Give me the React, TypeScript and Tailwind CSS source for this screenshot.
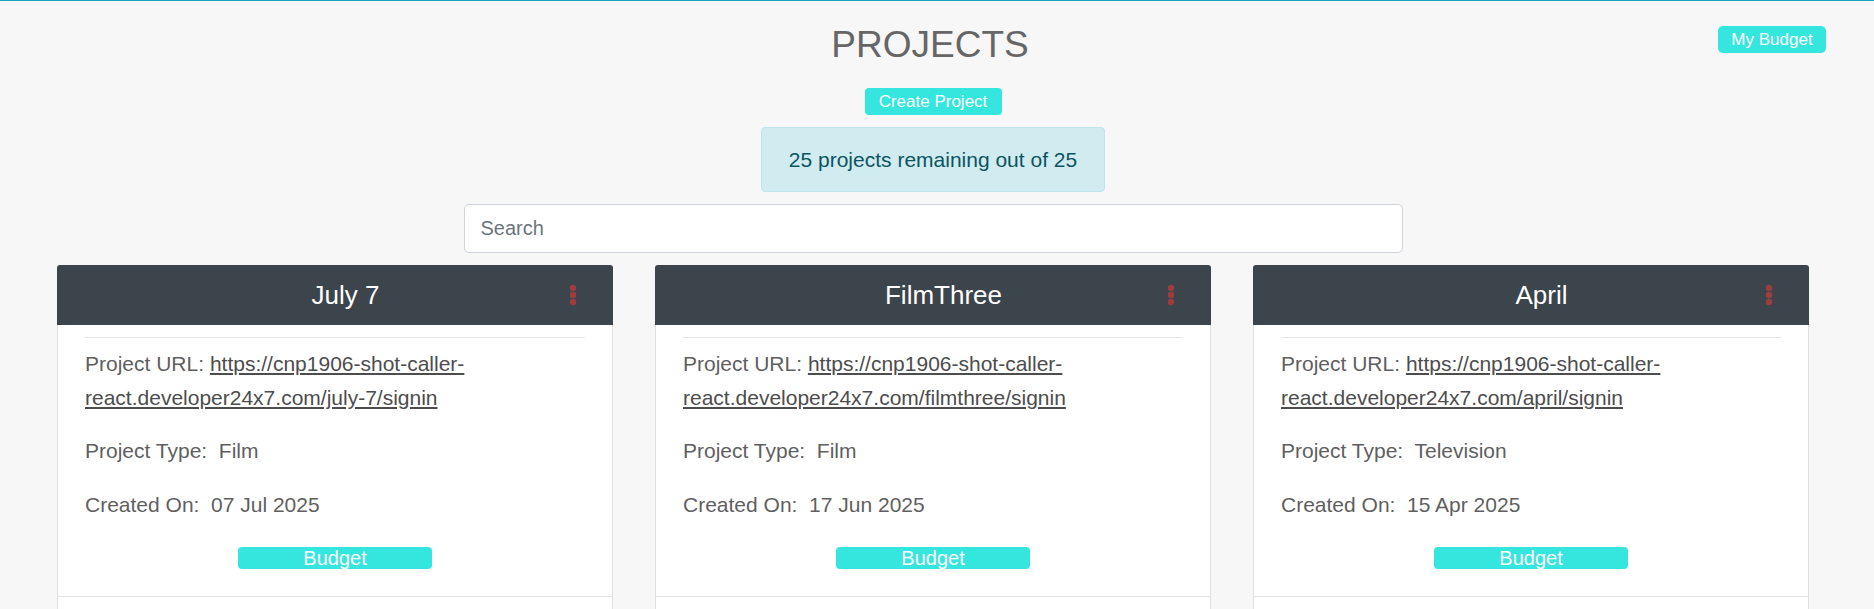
import React from "react";

type Project = {
  name: string;
  slug: string;
  type: string;
  created: string;
};

const projects: Project[] = [
  { name: "July 7", slug: "july-7", type: "Film", created: "07 Jul 2025" },
  { name: "FilmThree", slug: "filmthree", type: "Film", created: "17 Jun 2025" },
  { name: "April", slug: "april", type: "Television", created: "15 Apr 2025" },
];

const KebabIcon = () => (
  <svg width="8" height="22" viewBox="0 0 8 22" fill="#9e3d3d">
    <circle cx="4" cy="4" r="3.2" />
    <circle cx="4" cy="11" r="3.2" />
    <circle cx="4" cy="18" r="3.2" />
  </svg>
);

const ProjectCard: React.FC<{ project: Project }> = ({ project }) => {
  const url = `https://cnp1906-shot-caller-react.developer24x7.com/${project.slug}/signin`;
  return (
    <div className="bg-white border border-[#dfdfdf] rounded-[3px]">
      <div className="flex items-center h-[60px] bg-[#3c444c] pl-[71px] pr-[30px] -mx-px -mt-px rounded-t-[3px]">
        <h3 className="flex-1 text-center text-white text-[26px] leading-[30px]">
          {project.name}
        </h3>
        <button className="w-[20px] flex justify-center">
          <KebabIcon />
        </button>
      </div>

      <div className="px-[27px] pt-[12px] pb-[27px] border-b border-[#e3e3e3] text-[21px] leading-[33.5px] text-[#5f5f5f]">
        <hr className="border-t border-[#e5e5e5] mb-[9px]" />
        <p className="mb-[20px]">
          Project URL:{" "}
          <a href="#" className="underline text-[#4d4d4d]">
            {url}
          </a>
        </p>
        <p className="mb-[20px] whitespace-pre">Project Type:  {project.type}</p>
        <p className="mb-[26px] whitespace-pre">Created On:  {project.created}</p>
        <div className="flex justify-center">
          <button className="w-[194px] h-[22px] bg-[#35e6df] text-white text-[20px] leading-[22px] rounded-[4px]">
            Budget
          </button>
        </div>
      </div>
      <div className="h-[50px]" />
    </div>
  );
};

export default function App() {
  return (
    <div
      className="min-h-screen bg-[#f7f7f7] border-t border-[#17a2b8]"
      style={{ fontFamily: '"Liberation Sans", Arial, sans-serif' }}
    >
      {/* Header */}
      <div className="grid grid-cols-[1fr_auto_1fr] items-start pl-[34px] pr-[48px] pt-[22px]">
        <div />
        <h1 className="text-[37px] leading-[44px] text-[#666666]">PROJECTS</h1>
        <div className="flex justify-end">
          <button className="mt-[3px] w-[108px] h-[27px] bg-[#35e6df] text-white text-[17px] leading-[27px] rounded-[5px]">
            My Budget
          </button>
        </div>
      </div>

      <div className="flex flex-col items-center pl-[57px] pr-[65px]">
        <button className="mt-[21px] w-[137px] h-[27px] bg-[#35e6df] text-white text-[17px] leading-[27px] rounded-[4px]">
          Create Project
        </button>

        <div className="mt-[12px] px-[27px] py-[19px] bg-[#d1ecf1] border border-[#bee5eb] rounded-[4px] text-[#0c5460] text-[21px] leading-[25px]">
          25 projects remaining out of 25
        </div>

        <input
          type="text"
          placeholder="Search"
          className="mt-[12px] w-[939px] h-[49px] bg-white border border-[#ced4da] rounded-[5px] px-[16px] text-[20px] text-[#495057] placeholder:text-[#6c757d] outline-none"
        />

        <div className="mt-[12px] w-full grid grid-cols-3 gap-[42px]">
          {projects.map((p) => (
            <ProjectCard key={p.slug} project={p} />
          ))}
        </div>
      </div>
    </div>
  );
}
